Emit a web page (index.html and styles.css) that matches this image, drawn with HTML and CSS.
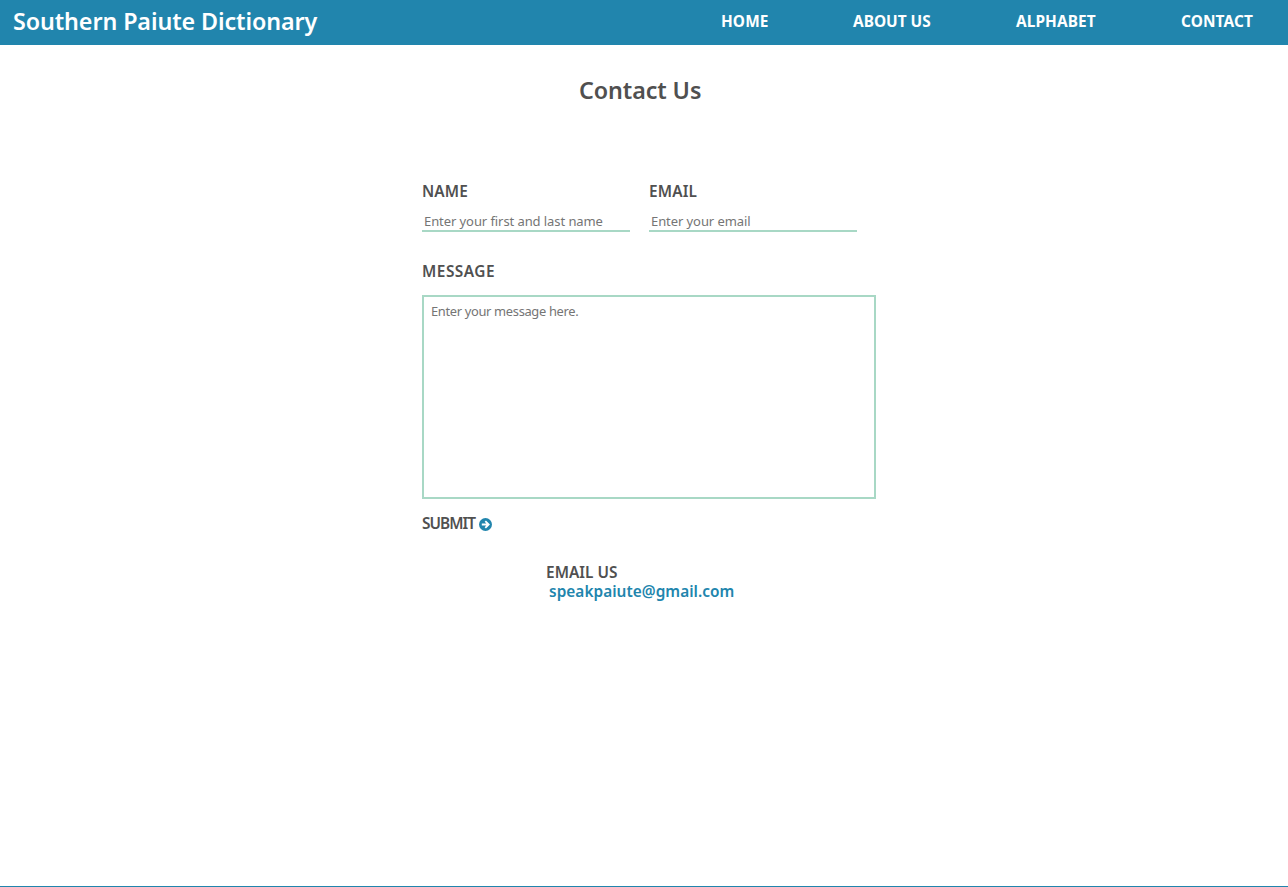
FILE: index.html
```html
<!DOCTYPE html>
<html lang="en">
<head>
<meta charset="utf-8">
<title>Southern Paiute Dictionary</title>
<link rel="stylesheet" href="styles.css">
</head>
<body>
<header class="bar">
  <a class="brand">Southern Paiute Dictionary</a>
  <nav class="nav">
    <a class="home">HOME</a>
    <a class="about">ABOUT US</a>
    <a class="alphabet">ALPHABET</a>
    <a class="contact">CONTACT</a>
  </nav>
</header>
<main class="main">
  <h1 class="title">Contact Us</h1>
  <form class="form">
    <div class="row">
      <div class="field">
        <label class="label name-label" for="name">NAME</label>
        <input class="input" id="name" type="text" placeholder="Enter your first and last name">
      </div>
      <div class="field">
        <label class="label email-label" for="email">EMAIL</label>
        <input class="input" id="email" type="text" placeholder="Enter your email">
      </div>
    </div>
    <label class="label message-label" for="message">MESSAGE</label>
    <textarea class="message" id="message" placeholder="Enter your message here."></textarea>
    <button class="submit" type="button">SUBMIT<svg class="arrow" viewBox="0 0 13 13"><circle cx="6.5" cy="6.5" r="6.5" fill="#2185ad"/><path d="M2.8 6.5H9.6M6.3 3.1L9.7 6.5L6.3 9.9" fill="none" stroke="#fff" stroke-width="1.8"/></svg></button>
  </form>
  <section class="direct">
    <div class="direct-label">EMAIL US</div>
    <a class="mail">speakpaiute@gmail.com</a>
  </section>
</main>
<footer class="footer"></footer>
</body>
</html>
```
FILE: styles.css
```css
* { box-sizing: border-box; }
body {
  margin: 0;
  height: 887px;
  display: flex;
  flex-direction: column;
  overflow: hidden;
  background: #fff;
  color: #505050;
  font-family: "Noto Sans", sans-serif;
}
.bar {
  flex: none;
  height: 45px;
  padding: 0 33px 2px 13px;
  display: flex;
  align-items: center;
  justify-content: space-between;
  background: #2185ad;
  color: #fff;
  white-space: nowrap;
}
.brand { margin-top: -2px; font-size: 23.3px; line-height: 32px; font-weight: 600; letter-spacing: -0.1px; }
.nav { display: flex; gap: 83px; font-size: 15.4px; line-height: 20px; font-weight: 700; }
.home { width: 49px; letter-spacing: 0.1px; }
.about { width: 80px; }
.alphabet { width: 82px; letter-spacing: 0.1px; }
.contact { width: 74px; letter-spacing: 0.1px; }
.main { flex: 1; }
.title {
  margin: 29px 0 0 579px;
  font-size: 23.3px;
  line-height: 32px;
  font-weight: 600;
  letter-spacing: -0.1px;
}
.form { margin: 76px 0 0 422px; width: 454px; }
.row { display: flex; gap: 19px; }
.field { width: 208px; }
.label { display: block; height: 20px; line-height: 20px; font-size: 15.4px; font-weight: 600; }
.name-label, .email-label { letter-spacing: 0.15px; }
.input {
  display: block;
  width: 208px;
  height: 21px;
  margin-top: 9px;
  padding: 1px 2px;
  border: 0;
  border-bottom: 2px solid #a8d8c5;
  background: none;
  font: 400 13px "Noto Sans", sans-serif;
  letter-spacing: -0.08px;
}
.message-label { margin-top: 30px; letter-spacing: 0.5px; }
.message {
  display: block;
  width: 454px;
  height: 204px;
  margin-top: 13px;
  padding: 5px 7px;
  border: 2px solid #a8d8c5;
  background: none;
  resize: none;
  font: 400 12.9px/19px "Noto Sans", sans-serif;
  letter-spacing: -0.33px;
}
.input::placeholder, .message::placeholder { color: #757575; opacity: 1; }
.submit {
  display: flex;
  align-items: center;
  gap: 4px;
  margin-top: 15px;
  padding: 0;
  border: 0;
  background: none;
  color: #505050;
  font: 600 15.4px/20px "Noto Sans", sans-serif;
  letter-spacing: -0.95px;
}
.arrow { width: 13px; height: 13px; }
.direct { margin: 29px 0 0 546px; font-size: 15.4px; line-height: 19px; font-weight: 600; letter-spacing: 0.04px; }
.mail { color: #2185ad; margin-left: 3px; }
.footer { flex: none; height: 1px; background: #2185ad; }
```
